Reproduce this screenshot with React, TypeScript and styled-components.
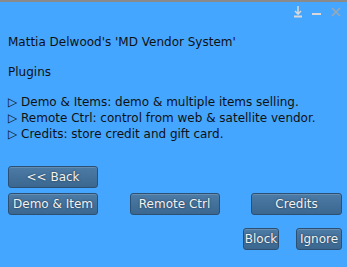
import React from 'react';
import styled, { createGlobalStyle } from 'styled-components';

const Global = createGlobalStyle`
  html, body { margin: 0; padding: 0; background: #44a6ff; }
  body { font-family: "DejaVu Sans", "Liberation Sans", sans-serif; }
`;

const Floater = styled.div`
  position: relative;
  width: 347px;
  height: 267px;
  box-sizing: border-box;
  background: #44a6ff;
  border-top: 2px solid #8a8a8a;
  color: #111;
  font-size: 12px;
  line-height: 16px;
  padding: 32px 5px 0 8px;
`;

const Controls = styled.div`
  position: absolute;
  top: 3px;
  right: 4px;
  display: flex;
  gap: 5px;
  align-items: center;
`;

const Line = styled.div<{ $gap?: number }>`
  margin-top: ${(p) => p.$gap ?? 0}px;
  white-space: nowrap;
`;

const ButtonRow = styled.div<{ $gap: number; $justify?: string }>`
  display: flex;
  justify-content: ${(p) => p.$justify ?? 'space-between'};
  gap: 0;
  margin-top: ${(p) => p.$gap}px;
`;

const Button = styled.button<{ $w: number; $ml?: number }>`
  width: ${(p) => p.$w}px;
  height: 22px;
  margin-left: ${(p) => p.$ml ?? 0}px;
  box-sizing: border-box;
  padding: 0;
  border: 1px solid #2c4f74;
  border-radius: 3px;
  background: linear-gradient(#4c7ba6, #3b678f);
  color: #f2f2f2;
  font-family: "DejaVu Sans", "Liberation Sans", sans-serif;
  font-size: 12px;
  text-shadow: 0 0 2px #1a2e44;
  box-shadow: inset 0 1px 0 rgba(255, 255, 255, 0.15);
`;

const Icon = styled.svg`
  display: block;
`;

export default function App() {
  return (
    <>
      <Global />
      <Floater>
        <Controls>
          <Icon width="14" height="14" viewBox="0 0 14 14">
            <path d="M7 1v8M4 6l3 3 3-3" stroke="#d8d8d8" strokeWidth="1.6" fill="none" />
            <rect x="3" y="10.5" width="8" height="2" fill="#d8d8d8" />
          </Icon>
          <Icon width="14" height="14" viewBox="0 0 14 14">
            <rect x="2" y="8" width="9" height="2" fill="#d8d8d8" />
          </Icon>
          <Icon width="14" height="14" viewBox="0 0 14 14">
            <path d="M3 3l8 8M11 3l-8 8" stroke="#9aa8b4" strokeWidth="1.6" />
          </Icon>
        </Controls>
        <Line>Mattia Delwood's 'MD Vendor System'</Line>
        <Line $gap={14}>Plugins</Line>
        <Line $gap={14}>▷ Demo &amp; Items: demo &amp; multiple items selling.</Line>
        <Line>▷ Remote Ctrl: control from web &amp; satellite vendor.</Line>
        <Line>▷ Credits: store credit and gift card.</Line>
        <ButtonRow $gap={24} $justify="flex-start">
          <Button $w={90}>&lt;&lt; Back</Button>
        </ButtonRow>
        <ButtonRow $gap={5}>
          <Button $w={90}>Demo &amp; Item</Button>
          <Button $w={90}>Remote Ctrl</Button>
          <Button $w={91}>Credits</Button>
        </ButtonRow>
        <ButtonRow $gap={13} $justify="flex-end">
          <Button $w={36}>Block</Button>
          <Button $w={46} $ml={17}>Ignore</Button>
        </ButtonRow>
      </Floater>
    </>
  );
}
